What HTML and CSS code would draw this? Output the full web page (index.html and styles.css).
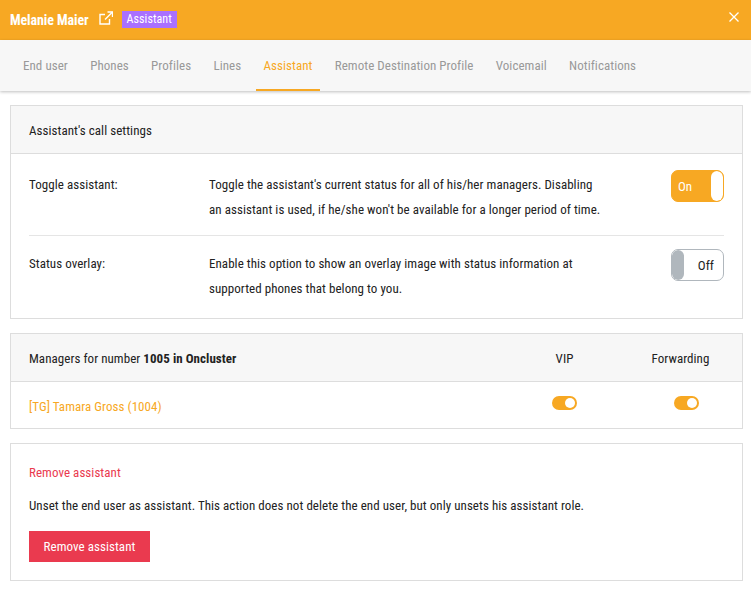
FILE: index.html
```html
<!DOCTYPE html>
<html lang="en">
<head>
    <meta charset="UTF-8">
    <title>Assistant</title>
    <link rel="stylesheet" href="styles.css">
</head>
<body>
    <header class="topbar">
        <span class="user-name">Melanie Maier</span>
        <svg class="ext-icon" width="14" height="14" viewBox="0 0 14 14" fill="none" stroke="#fff" stroke-width="1.4">
            <path d="M6 3.5H1V13H10.5V8"/>
            <path d="M8.5 1H13.5V6"/>
            <path d="M13.5 1L6 8.5"/>
        </svg>
        <span class="role-badge">Assistant</span>
        <svg class="close-icon" width="10" height="10" viewBox="0 0 10 10" stroke="#fff" stroke-width="1.3">
            <path d="M0.5 0.5L9.5 9.5M9.5 0.5L0.5 9.5"/>
        </svg>
    </header>

    <nav class="tabs">
        <a class="tab">End user</a>
        <a class="tab">Phones</a>
        <a class="tab">Profiles</a>
        <a class="tab">Lines</a>
        <a class="tab active">Assistant</a>
        <a class="tab">Remote Destination Profile</a>
        <a class="tab">Voicemail</a>
        <a class="tab">Notifications</a>
    </nav>

    <main class="content">
        <section class="panel">
            <div class="panel-head">Assistant's call settings</div>
            <div class="settings">
                <div class="setting">
                    <div class="setting-label">Toggle assistant:</div>
                    <div class="setting-text">Toggle the assistant's current status for all of his/her managers. Disabling an assistant is used, if he/she won't be available for a longer period of time.</div>
                    <div class="switch on"><span>On</span><i></i></div>
                </div>
                <div class="setting">
                    <div class="setting-label">Status overlay:</div>
                    <div class="setting-text">Enable this option to show an overlay image with status information at supported phones that belong to you.</div>
                    <div class="switch off"><i></i><span>Off</span></div>
                </div>
            </div>
        </section>

        <section class="panel">
            <div class="panel-head managers-row">
                <div class="manager-name">Managers for number <b>1005 in Oncluster</b></div>
                <div class="col-vip">VIP</div>
                <div class="col-fwd">Forwarding</div>
            </div>
            <div class="managers-row manager">
                <div class="manager-name"><a class="link">[TG] Tamara Gross (1004)</a></div>
                <div class="col-vip"><span class="mini-switch"></span></div>
                <div class="col-fwd"><span class="mini-switch"></span></div>
            </div>
        </section>

        <section class="panel danger">
            <h3 class="danger-title">Remove assistant</h3>
            <p class="danger-text">Unset the end user as assistant. This action does not delete the end user, but only unsets his assistant role.</p>
            <button class="danger-btn">Remove assistant</button>
        </section>
    </main>
</body>
</html>
```

FILE: styles.css
```css
body {
    margin: 0;
    background: #fff;
    color: #222;
    font-family: "Roboto", sans-serif;
    font-size: 13px;
    font-stretch: 75%;
    letter-spacing: 0.05px;
}

.topbar {
    display: flex;
    align-items: center;
    height: 40px;
    padding: 0 12px 0 10px;
    background: #f7a823;
    color: #fff;
}
.user-name { font-weight: bold; font-size: 14px; letter-spacing: -0.1px; }
.ext-icon { margin-left: 10px; margin-top: -4px; }
.role-badge { margin-left: 9px; margin-top: -1px; padding: 1px 5px; background: #a970ff; font-size: 12px; line-height: 15px; }
.close-icon { margin-left: auto; margin-top: -6px; }

.tabs {
    display: flex;
    height: 51px;
    padding: 0 0 0 15px;
    background: #f7f7f7;
    box-shadow: 0 1px 3px rgba(0,0,0,.25);
}
.tab {
    padding: 0 8px;
    margin-right: 6.3px;
    line-height: 52px;
    color: #999;
}
.tab.active { color: #f7a823; border-bottom: 2px solid #f7a823; height: 49px; }

.content { padding: 14px 8px 8px 10px; }

.panel { border: 1px solid #ddd; margin-bottom: 14px; }
.panel-head {
    height: 47px;
    line-height: 50px;
    padding: 0 18px;
    background: #f7f7f7;
    border-bottom: 1px solid #ddd;
}

.settings { padding: 0 18px; }
.setting {
    display: flex;
    align-items: flex-start;
    height: 81px;
    padding-top: 18px;
    box-sizing: border-box;
}
.setting + .setting {
    height: 83px;
    padding-top: 15px;
    border-top: 1px solid #e5e5e5;
}
.setting-label { width: 180px; line-height: 25px; }
.setting-text { width: 392px; line-height: 25px; }

.switch {
    display: flex;
    align-items: center;
    justify-content: space-between;
    width: 53px;
    height: 32px;
    margin-top: -2px;
    margin-left: auto;
    box-sizing: border-box;
    border-radius: 7px;
    border: 1px solid #b0b7bd;
    overflow: hidden;
}
.switch i { width: 12px; height: 100%; border-radius: 6px; background: #b0b7bd; }
.switch span { padding: 0 9px 0 6px; }
.switch.on { background: #f7a823; border-color: #f7a823; color: #fff; }
.switch.on i { background: #fff; }

.managers-row {
    display: flex;
    align-items: center;
    box-sizing: border-box;
    padding: 2px 18px 0;
}
.panel-head.managers-row { height: 48px; line-height: normal; }
.manager { height: 46px; }
.manager-name { flex: 1; }
.col-vip { width: 76px; text-align: center; }
.col-fwd { width: 76px; text-align: center; margin-left: 45.5px; box-sizing: border-box; }
.panel-head .col-fwd { padding-right: 11px; }
.link { color: #f7a823; }

.mini-switch {
    display: block;
    position: relative;
    width: 25px;
    height: 14px;
    margin: -6px auto 0;
    border-radius: 7px;
    background: #f7a823;
}
.mini-switch::after {
    content: "";
    position: absolute;
    right: 2px;
    top: 2px;
    width: 10px;
    height: 10px;
    border-radius: 50%;
    background: #fff;
}

.danger { padding: 21px 18px 18px; margin-bottom: 0; }
.danger-title { margin: 0; font-size: 13px; font-weight: normal; color: #ea3a4f; }
.danger-text { margin: 18px 0; }
.danger-btn {
    height: 31px;
    width: 121px;
    border: 0;
    background: #ea3a4f;
    color: #fff;
    font: inherit;
    letter-spacing: inherit;
}
```
